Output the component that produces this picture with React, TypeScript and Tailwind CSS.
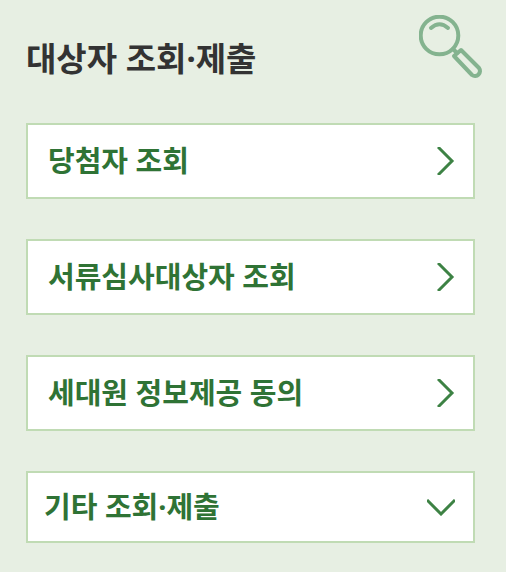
/**
 * Lookup / submission menu: applicant links plus an expandable "other" row.
 */

const links = ["당첨자 조회", "서류심사대상자 조회", "세대원 정보제공 동의"];

function SearchIcon() {
  return (
    <svg
      viewBox="0 0 64 64"
      className="h-16 w-16 shrink-0"
      fill="none"
      stroke="#84b38f"
      strokeWidth="4"
      strokeLinecap="round"
      strokeLinejoin="round"
      aria-hidden="true"
    >
      <circle cx="20.5" cy="20.5" r="18.8" />
      <path d="M12 13 Q20.5 5.5 29 13" />
      <path d="M34 34 L38 38" />
      <path d="M35 41 L42 35 L60 53 A5 5 0 0 1 53 60 Z" />
    </svg>
  );
}

function ChevronRight() {
  return (
    <svg
      viewBox="0 0 18 28"
      className="h-7 w-[18px] shrink-0"
      fill="none"
      stroke="#3d8244"
      strokeWidth="3"
      aria-hidden="true"
    >
      <path d="M1 0 L15 14 L1 28" />
    </svg>
  );
}

function ChevronDown() {
  return (
    <svg
      viewBox="0 0 28 17"
      className="h-[17px] w-7 shrink-0"
      fill="none"
      stroke="#3d8244"
      strokeWidth="3"
      aria-hidden="true"
    >
      <path d="M0 1 L14 15 L28 1" />
    </svg>
  );
}

export default function App() {
  return (
    <main className="min-h-screen bg-[#e7efe3] pt-[15px] pr-[31px] pb-7 pl-[26px] font-['Noto_Sans','Noto_Sans_CJK_KR',sans-serif] font-bold">
      <header className="-mr-2 flex items-start justify-between">
        <h1 className="pt-5 text-[33px] leading-[48px] text-[#333333]">대상자 조회·제출</h1>
        <SearchIcon />
      </header>

      <nav className="mt-10 flex flex-col gap-10 text-[29px] leading-10 text-[#2f7335]">
        {links.map((label) => (
          <a
            key={label}
            href="#"
            className="flex h-[76px] items-center justify-between border-2 border-[#c0dbb4] bg-white pr-[18px] pl-5"
          >
            {label}
            <ChevronRight />
          </a>
        ))}
        <button
          type="button"
          aria-expanded="false"
          className="flex h-[72px] cursor-pointer items-center justify-between border-2 border-[#c0dbb4] bg-white pr-[18px] pl-4"
        >
          기타 조회·제출
          <ChevronDown />
        </button>
      </nav>
    </main>
  );
}
